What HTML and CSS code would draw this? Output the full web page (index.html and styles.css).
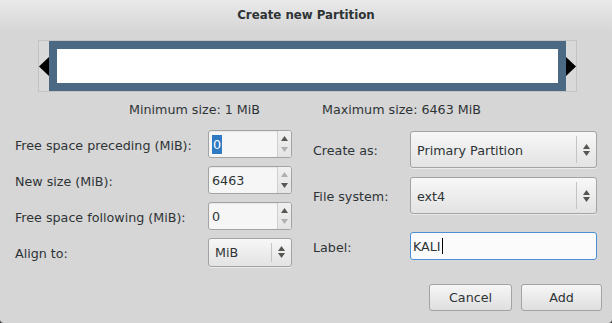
FILE: index.html
```html
<!DOCTYPE html>
<html lang="en">
<head>
    <meta charset="UTF-8">
    <title>Create new Partition</title>
    <link rel="stylesheet" href="styles.css">
</head>
<body>
    <div class="dialog">
        <div class="titlebar">Create new Partition</div>

        <div class="part-frame">
            <svg class="grip" width="10" height="19" viewBox="0 0 10 19"><polygon points="10,0 0,9.5 10,19" fill="#000"/></svg>
            <div class="part-bar"><div class="part-free"></div></div>
            <svg class="grip" width="10" height="19" viewBox="0 0 10 19"><polygon points="0,0 10,9.5 0,19" fill="#000"/></svg>
        </div>

        <div class="limits">
            <span class="limit-min">Minimum size: 1 MiB</span>
            <span class="limit-max">Maximum size: 6463 MiB</span>
        </div>

        <div class="form">
            <div class="col col-left">
                <div class="row">
                    <label>Free space preceding (MiB):</label>
                    <div class="spin">
                        <div class="spin-text"><span class="selected">0</span></div>
                        <div class="spin-buttons">
                            <svg width="7" height="5" viewBox="0 0 7 5"><polygon points="3.5,0 7,5 0,5" class="on"/></svg>
                            <svg width="7" height="5" viewBox="0 0 7 5"><polygon points="0,0 7,0 3.5,5" class="off"/></svg>
                        </div>
                    </div>
                </div>
                <div class="row">
                    <label>New size (MiB):</label>
                    <div class="spin">
                        <div class="spin-text">6463</div>
                        <div class="spin-buttons">
                            <svg width="7" height="5" viewBox="0 0 7 5"><polygon points="3.5,0 7,5 0,5" class="off"/></svg>
                            <svg width="7" height="5" viewBox="0 0 7 5"><polygon points="0,0 7,0 3.5,5" class="on"/></svg>
                        </div>
                    </div>
                </div>
                <div class="row">
                    <label>Free space following (MiB):</label>
                    <div class="spin">
                        <div class="spin-text">0</div>
                        <div class="spin-buttons">
                            <svg width="7" height="5" viewBox="0 0 7 5"><polygon points="3.5,0 7,5 0,5" class="on"/></svg>
                            <svg width="7" height="5" viewBox="0 0 7 5"><polygon points="0,0 7,0 3.5,5" class="off"/></svg>
                        </div>
                    </div>
                </div>
                <div class="row">
                    <label>Align to:</label>
                    <div class="combo combo-small">
                        <span class="combo-text">MiB</span>
                        <span class="combo-sep"></span>
                        <span class="combo-arrows">
                            <svg width="7" height="5" viewBox="0 0 7 5"><polygon points="3.5,0 7,5 0,5" class="on"/></svg>
                            <svg width="7" height="5" viewBox="0 0 7 5"><polygon points="0,0 7,0 3.5,5" class="on"/></svg>
                        </span>
                    </div>
                </div>
            </div>

            <div class="col col-right">
                <div class="row row-tall">
                    <label>Create as:</label>
                    <div class="combo">
                        <span class="combo-text">Primary Partition</span>
                        <span class="combo-sep"></span>
                        <span class="combo-arrows">
                            <svg width="7" height="5" viewBox="0 0 7 5"><polygon points="3.5,0 7,5 0,5" class="on"/></svg>
                            <svg width="7" height="5" viewBox="0 0 7 5"><polygon points="0,0 7,0 3.5,5" class="on"/></svg>
                        </span>
                    </div>
                </div>
                <div class="row row-tall">
                    <label>File system:</label>
                    <div class="combo">
                        <span class="combo-text">ext4</span>
                        <span class="combo-sep"></span>
                        <span class="combo-arrows">
                            <svg width="7" height="5" viewBox="0 0 7 5"><polygon points="3.5,0 7,5 0,5" class="on"/></svg>
                            <svg width="7" height="5" viewBox="0 0 7 5"><polygon points="0,0 7,0 3.5,5" class="on"/></svg>
                        </span>
                    </div>
                </div>
                <div class="row row-label">
                    <label>Label:</label>
                    <div class="entry">KALI<span class="caret"></span></div>
                </div>
            </div>
        </div>

        <div class="actions">
            <button class="btn btn-cancel">Cancel</button>
            <button class="btn btn-add">Add</button>
        </div>
    </div>
</body>
</html>
```

FILE: styles.css
```css
:root {
    --bg: #d6d6d6;
    --text: #2e3436;
    --border: #a3a3a3;
    --bar: #4b6983;
    --focus: #4a90d9;
}

* {
    margin: 0;
    padding: 0;
    box-sizing: border-box;
}

body {
    background: #3c3c3c;
    font-family: 'DejaVu Sans', sans-serif;
    font-size: 12.7px;
    color: var(--text);
}

.dialog {
    width: 612px;
    height: 323px;
    background: var(--bg);
    border-radius: 0 0 4px 4px;
    overflow: hidden;
}

.titlebar {
    height: 32px;
    line-height: 31px;
    text-align: center;
    font-weight: bold;
    font-size: 11.8px;
    background: linear-gradient(#e9e9e9, var(--bg));
}

/* partition graphic */
.part-frame {
    display: flex;
    align-items: center;
    width: 539px;
    height: 52px;
    margin: 8px 0 0 38px;
    border: 1px solid #c3c3c3;
    background: #d9d9d9;
}

.part-bar {
    flex: 1;
    height: 50px;
    border: 8px solid var(--bar);
}

.part-free {
    height: 100%;
    background: #fff;
}

.limits {
    display: flex;
    height: 16px;
    line-height: 16px;
    margin-top: 10px;
    padding-left: 129px;
}

.limit-min {
    width: 193px;
}

/* form */
.form {
    display: flex;
    margin-top: 12px;
    padding-left: 15px;
}

.col {
    display: flex;
    flex-direction: column;
}

.col-left {
    gap: 8px;
}

.col-right {
    margin-left: 21px;
    padding-top: 1px;
    gap: 9px;
}

.row {
    display: flex;
    align-items: center;
    height: 28px;
}

.col-left label {
    width: 193px;
    padding-top: 3px;
}

.col-right label {
    width: 97px;
    padding-top: 2px;
}

.row-tall {
    height: 37px;
}

.row-label {
    margin-top: 9px;
}

/* spin buttons */
.spin {
    display: flex;
    width: 84px;
    height: 28px;
    border: 1px solid var(--border);
    border-radius: 3px;
    background: #f6f6f6;
    box-shadow: inset 0 1px 1px rgba(0,0,0,0.06);
    overflow: hidden;
}

.spin-text {
    flex: 1;
    display: flex;
    align-items: center;
    padding-left: 3px;
}

.selected {
    background: #2f7ac3;
    color: #fff;
    padding: 2px 1px;
}

.spin-buttons {
    width: 14px;
    display: flex;
    flex-direction: column;
    justify-content: space-around;
    align-items: center;
    padding: 2px 0;
    border-left: 1px solid #cfcfcf;
    background: linear-gradient(#f0f0f0, #e4e4e4);
}

.on {
    fill: #555753;
}

.off {
    fill: #b0b0b0;
}

/* combo boxes */
.combo {
    display: flex;
    align-items: center;
    width: 187px;
    height: 37px;
    border: 1px solid var(--border);
    border-radius: 3px;
    background: linear-gradient(#f7f7f7, #e3e3e3);
    box-shadow: 0 1px 0 rgba(255,255,255,0.5);
}

.combo-small {
    width: 84px;
    height: 29px;
}

.combo-text {
    flex: 1;
    padding-left: 6px;
    padding-top: 1px;
}

.combo-sep {
    align-self: stretch;
    width: 1px;
    margin: 4px 0;
    background: #c4c4c4;
}

.combo-arrows {
    display: flex;
    flex-direction: column;
    gap: 2px;
    width: 19px;
    align-items: center;
}

/* text entry */
.entry {
    display: flex;
    align-items: center;
    width: 187px;
    height: 28px;
    padding-left: 2px;
    border: 1px solid var(--focus);
    border-radius: 3px;
    background: #fbfbfb;
}

.caret {
    display: inline-block;
    width: 1px;
    height: 16px;
    margin-left: 1px;
    background: #000;
}

/* buttons */
.actions {
    display: flex;
    justify-content: flex-end;
    gap: 9px;
    margin-top: 18px;
    padding-right: 10px;
}

.btn {
    height: 27px;
    border: 1px solid var(--border);
    border-radius: 3px;
    background: linear-gradient(#f6f6f6, #dfdfdf);
    font-family: inherit;
    font-size: inherit;
    color: var(--text);
}

.btn-cancel {
    width: 83px;
}

.btn-add {
    width: 81px;
}
```
